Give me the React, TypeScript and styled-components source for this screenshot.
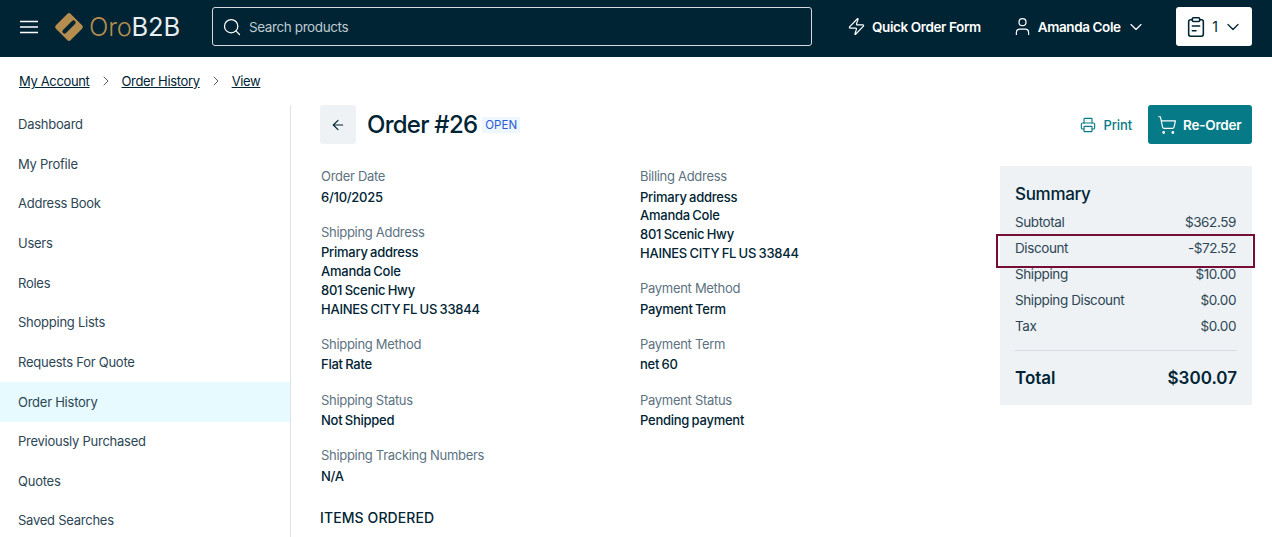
import React from "react";
import styled, { createGlobalStyle } from "styled-components";
import { ArrowLeft, ChevronDown, ChevronRight, Printer, Search, ShoppingCart, User, Zap } from "lucide-react";

const Global = createGlobalStyle`
  html, body { margin: 0; padding: 0; height: 537px; overflow: hidden; background: #fff; }
  body { font-family: Inter, "Liberation Sans", sans-serif; color: #002434; }
  * { box-sizing: border-box; }
`;
const Page = styled.div`width: 1272px; height: 537px; overflow: hidden; position: relative;`;
const Header = styled.header`height: 57px; background: #002434; display: flex; align-items: center; padding: 0 20px 4px 20px; color: #fff;`;
const Burger = styled.span`display: flex; width: 18px; margin-right: 16px; color: #fff;`;
const Logo = styled.div`display: flex; align-items: center; width: 126px; font-size: 25.5px; font-weight: 300; letter-spacing: -0.2px; gap: 5px;`;
const Gold = styled.span`color: #b48d4f;`;
const Light = styled.span`color: #e8edf0; font-weight: 400;`;
const SearchBox = styled.div`margin-left: 32px; width: 600px; height: 39px; border: 1px solid #d5dbe0; border-radius: 3px; display: flex; align-items: center; padding: 0 9px; gap: 7px; color: #bfcad0; font-size: 13.5px; letter-spacing: -0.4px;`;
const Nav = styled.div`display: flex; align-items: center; font-size: 13.5px; font-weight: 600; letter-spacing: -0.4px;`;
const QuickNav = styled(Nav)`margin-left: 35px; gap: 6px;`;
const UserNav = styled(Nav)`margin-left: 31px; gap: 5px;`;
const Cart = styled.div`margin-left: auto; width: 76px; height: 39px; background: #fff; border-radius: 3px; color: #002434; display: flex; align-items: center; justify-content: center; gap: 5px; font-size: 14px;`;
const Crumbs = styled.nav`height: 48px; padding: 0 0 0 19px; display: flex; align-items: center; font-size: 13px; letter-spacing: -0.35px;`;
const Crumb = styled.a`color: #002434; text-decoration: underline;`;
const Sep = styled.span`display: flex; margin: 0 8px; color: #4a5f6a;`;
const Body = styled.div`display: flex; align-items: stretch; height: 432px;`;
const Side = styled.aside`width: 291px; border-right: 1px solid #dfe3e6; flex: none; display: flex; flex-direction: column;`;
const SideItem = styled.div<{ $active?: boolean }>`height: 39.65px; flex: none; padding: 0 0 1.5px 18px; display: flex; align-items: center; font-size: 13px; letter-spacing: -0.25px; color: #2d4654; background: ${p => p.$active ? "#e6faff" : "transparent"};`;
const Main = styled.main`flex: 1; padding: 0 20px 0 29px; position: relative;`;
const TitleRow = styled.div`display: flex; align-items: center; height: 39px;`;
const Back = styled.span`width: 36px; height: 39px; border-radius: 3px; background: #eef2f5; display: flex; align-items: center; justify-content: center; color: #002434;`;
const Title = styled.h1`margin: 0 0 0 11px; font-size: 24px; font-weight: 500; line-height: 39px; letter-spacing: -0.75px;`;
const Badge = styled.span`margin-left: 5px; background: #eef6ff; color: #2a5bd7; font-size: 11.5px; padding: 0 3px; line-height: 16px;`;
const Actions = styled.div`margin-left: auto; display: flex; align-items: center;`;
const PrintBtn = styled.span`display: flex; align-items: center; gap: 7px; color: #067a87; font-size: 13px; font-weight: 500; margin-right: 16px; letter-spacing: -0.1px;`;
const Reorder = styled.span`width: 104px; height: 39px; border-radius: 3px; background: #067a87; color: #fff; display: flex; align-items: center; padding-left: 9px; gap: 6px; font-size: 13.5px; font-weight: 600; letter-spacing: -0.2px;`;
const Content = styled.div`display: flex; margin-top: 22.3px;`;
const Column = styled.div<{ $w: number }>`width: ${p => p.$w}px; flex: none; padding-left: 1px;`;
const Field = styled.div`margin-bottom: 15.7px;`;
const Label = styled.div`font-size: 13px; line-height: 21.2px; color: #5d7280; letter-spacing: -0.3px;`;
const Value = styled.div`font-size: 13px; line-height: 18.8px; font-weight: 500; color: #002434; letter-spacing: -0.25px; word-spacing: -0.8px;`;
const ItemsTitle = styled.h2`margin: 23px 0 0 -1px; font-size: 14px; font-weight: 500; line-height: 20px; letter-spacing: 0.1px;`;
const Summary = styled.section`width: 252px; height: 239px; margin: -0.3px 0 0 42px; background: #eef2f5; padding: 16px 15px 0;`;
const SumTitle = styled.h3`margin: 0 0 3px; font-size: 17px; line-height: 24px; font-weight: 500; letter-spacing: -0.3px;`;
const SumRow = styled.div`display: flex; justify-content: space-between; height: 26px; align-items: center; padding-right: 1px; font-size: 13.5px; letter-spacing: -0.4px; color: #2d4654;`;
const Rule = styled.hr`border: 0; border-top: 1px solid #d5dbe0; margin: 11px 0 0;`;
const Total = styled.div`display: flex; justify-content: space-between; align-items: center; margin-top: 14px; font-size: 17px; line-height: 26px; font-weight: 600;`;
const Highlight = styled.div`position: absolute; left: 996px; top: 234px; width: 259px; height: 34px; border: 2px solid #750d37; pointer-events: none;`;

const LogoMark = () => (
  <svg width="30" height="30" viewBox="0 0 30 30" aria-hidden>
    <rect x="4.5" y="4.5" width="21" height="21" rx="2.5" fill="#b48d4f" transform="rotate(45 15 15)" />
    <path d="M10.5 19.5 L19.5 10.5" stroke="#002434" strokeWidth="4.2" strokeLinecap="round" />
  </svg>
);

const BurgerIcon = () => (
  <svg width="18" height="14" viewBox="0 0 18 14" aria-hidden>
    <path d="M0 1.5H18M0 7H18M0 12.5H18" stroke="currentColor" strokeWidth="1.6" />
  </svg>
);

const ClipboardIcon = () => (
  <svg width="22" height="22" viewBox="0 0 24 24" fill="none" stroke="currentColor" strokeWidth="1.7" strokeLinecap="round" strokeLinejoin="round" aria-hidden>
    <rect x="8" y="2" width="8" height="4" rx="1" />
    <path d="M16 4h2a2 2 0 0 1 2 2v14a2 2 0 0 1-2 2H6a2 2 0 0 1-2-2V6a2 2 0 0 1 2-2h2" />
    <path d="M8 11h8M8 16h4" />
  </svg>
);

const sideItems = ["Dashboard", "My Profile", "Address Book", "Users", "Roles", "Shopping Lists", "Requests For Quote", "Order History", "Previously Purchased", "Quotes", "Saved Searches"];

const F = ({ label, lines }: { label: string; lines: string[] }) => (
  <Field>
    <Label>{label}</Label>
    {lines.map(l => <Value key={l}>{l}</Value>)}
  </Field>
);

export default function App() {
  return (
    <Page>
      <Global />
      <Header>
        <Burger><BurgerIcon /></Burger>
        <Logo>
          <LogoMark />
          <span><Gold>Oro</Gold><Light>B2B</Light></span>
        </Logo>
        <SearchBox><Search size={20} strokeWidth={1.5} color="#fff" /><span>Search products</span></SearchBox>
        <QuickNav><Zap size={19} strokeWidth={1.5} />Quick Order Form</QuickNav>
        <UserNav><User size={21} strokeWidth={1.4} />Amanda Cole<ChevronDown size={20} strokeWidth={1.4} /></UserNav>
        <Cart><ClipboardIcon />1<ChevronDown size={20} strokeWidth={1.5} /></Cart>
      </Header>
      <Crumbs>
        <Crumb>My Account</Crumb><Sep><ChevronRight size={16} strokeWidth={1.5} /></Sep>
        <Crumb>Order History</Crumb><Sep><ChevronRight size={16} strokeWidth={1.5} /></Sep>
        <Crumb>View</Crumb>
      </Crumbs>
      <Body>
        <Side>{sideItems.map(s => <SideItem key={s} $active={s === "Order History"}>{s}</SideItem>)}</Side>
        <Main>
          <TitleRow>
            <Back><ArrowLeft size={16} strokeWidth={1.7} /></Back>
            <Title>Order #26</Title>
            <Badge>OPEN</Badge>
            <Actions>
              <PrintBtn><Printer size={16} strokeWidth={1.7} />Print</PrintBtn>
              <Reorder><ShoppingCart size={20} strokeWidth={1.4} />Re-Order</Reorder>
            </Actions>
          </TitleRow>
          <Content>
            <Column $w={319}>
              <F label="Order Date" lines={["6/10/2025"]} />
              <F label="Shipping Address" lines={["Primary address", "Amanda Cole", "801 Scenic Hwy", "HAINES CITY FL US 33844"]} />
              <F label="Shipping Method" lines={["Flat Rate"]} />
              <F label="Shipping Status" lines={["Not Shipped"]} />
              <F label="Shipping Tracking Numbers" lines={["N/A"]} />
              <ItemsTitle>ITEMS ORDERED</ItemsTitle>
            </Column>
            <Column $w={319}>
              <F label="Billing Address" lines={["Primary address", "Amanda Cole", "801 Scenic Hwy", "HAINES CITY FL US 33844"]} />
              <F label="Payment Method" lines={["Payment Term"]} />
              <F label="Payment Term" lines={["net 60"]} />
              <F label="Payment Status" lines={["Pending payment"]} />
            </Column>
            <Summary>
              <SumTitle>Summary</SumTitle>
              <SumRow><span>Subtotal</span><span>$362.59</span></SumRow>
              <SumRow><span>Discount</span><span>-$72.52</span></SumRow>
              <SumRow><span>Shipping</span><span>$10.00</span></SumRow>
              <SumRow><span>Shipping Discount</span><span>$0.00</span></SumRow>
              <SumRow><span>Tax</span><span>$0.00</span></SumRow>
              <Rule />
              <Total><span>Total</span><span>$300.07</span></Total>
            </Summary>
          </Content>
        </Main>
      </Body>
      <Highlight />
    </Page>
  );
}
